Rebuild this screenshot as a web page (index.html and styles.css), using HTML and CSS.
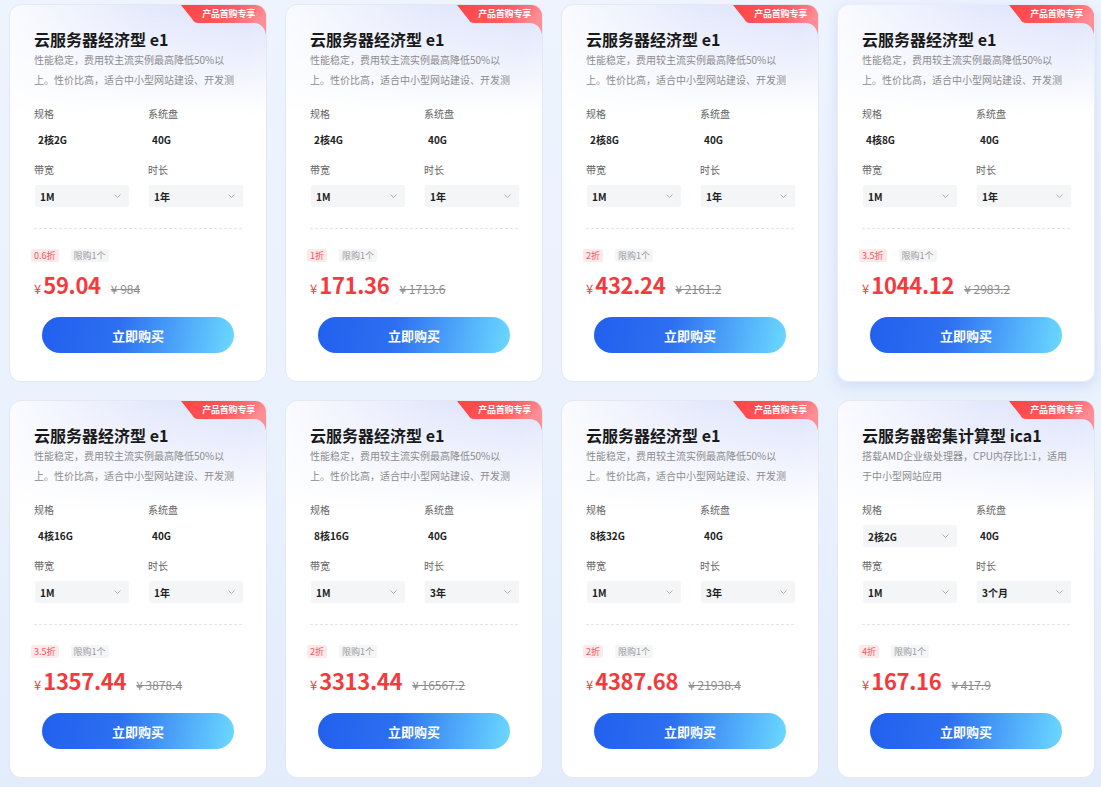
FILE: index.html
```html
<!DOCTYPE html>
<html lang="zh-CN">
<head>
    <meta charset="UTF-8">
    <meta name="viewport" content="width=device-width, initial-scale=1.0">
    <title>云服务器 - 产品首购专享</title>
    <link rel="stylesheet" href="styles.css">
</head>
<body>
    <div class="product-grid">

        <!-- 第一行 -->
        <div class="card">
            <svg class="ribbon" viewBox="0 0 85 30" width="85" height="30"><defs><linearGradient id="rb" x1="0" y1="0" x2="1" y2="0.3"><stop offset="0" stop-color="#ff4343"/><stop offset="0.6" stop-color="#ff5a5f"/><stop offset="1" stop-color="#ff8f97"/></linearGradient></defs><path d="M0,0 H85 V30 C84,23 80,18 72,18 H17 C14,18 12.5,16.5 11.5,14.5 Z" fill="url(#rb)"/></svg>
            <span class="ribbon-text">产品首购专享</span>
            <h3 class="card-title">云服务器经济型 e1</h3>
            <p class="card-desc">性能稳定，费用较主流实例最高降低50%以上。性价比高，适合中小型网站建设、开发测</p>
            <div class="spec-grid">
                <div class="spec"><div class="spec-label">规格</div><div class="spec-value">2核2G</div></div>
                <div class="spec"><div class="spec-label">系统盘</div><div class="spec-value">40G</div></div>
                <div class="spec"><div class="spec-label">带宽</div><div class="select">1M<svg class="arrow" viewBox="0 0 7 4" width="7" height="4"><polyline points="0.5,0.5 3.5,3.5 6.5,0.5"/></svg></div></div>
                <div class="spec"><div class="spec-label">时长</div><div class="select">1年<svg class="arrow" viewBox="0 0 7 4" width="7" height="4"><polyline points="0.5,0.5 3.5,3.5 6.5,0.5"/></svg></div></div>
            </div>
            <div class="divider"></div>
            <div class="tags"><span class="tag tag-red">0.6折</span><span class="tag tag-gray">限购1个</span></div>
            <div class="price-row"><span class="yen">¥</span><span class="price">59.04</span><span class="old-price">¥ 984</span></div>
            <button class="buy-btn">立即购买</button>
        </div>

        <div class="card">
            <svg class="ribbon" viewBox="0 0 85 30" width="85" height="30"><path d="M0,0 H85 V30 C84,23 80,18 72,18 H17 C14,18 12.5,16.5 11.5,14.5 Z" fill="url(#rb)"/></svg>
            <span class="ribbon-text">产品首购专享</span>
            <h3 class="card-title">云服务器经济型 e1</h3>
            <p class="card-desc">性能稳定，费用较主流实例最高降低50%以上。性价比高，适合中小型网站建设、开发测</p>
            <div class="spec-grid">
                <div class="spec"><div class="spec-label">规格</div><div class="spec-value">2核4G</div></div>
                <div class="spec"><div class="spec-label">系统盘</div><div class="spec-value">40G</div></div>
                <div class="spec"><div class="spec-label">带宽</div><div class="select">1M<svg class="arrow" viewBox="0 0 7 4" width="7" height="4"><polyline points="0.5,0.5 3.5,3.5 6.5,0.5"/></svg></div></div>
                <div class="spec"><div class="spec-label">时长</div><div class="select">1年<svg class="arrow" viewBox="0 0 7 4" width="7" height="4"><polyline points="0.5,0.5 3.5,3.5 6.5,0.5"/></svg></div></div>
            </div>
            <div class="divider"></div>
            <div class="tags"><span class="tag tag-red">1折</span><span class="tag tag-gray">限购1个</span></div>
            <div class="price-row"><span class="yen">¥</span><span class="price">171.36</span><span class="old-price">¥ 1713.6</span></div>
            <button class="buy-btn">立即购买</button>
        </div>

        <div class="card">
            <svg class="ribbon" viewBox="0 0 85 30" width="85" height="30"><path d="M0,0 H85 V30 C84,23 80,18 72,18 H17 C14,18 12.5,16.5 11.5,14.5 Z" fill="url(#rb)"/></svg>
            <span class="ribbon-text">产品首购专享</span>
            <h3 class="card-title">云服务器经济型 e1</h3>
            <p class="card-desc">性能稳定，费用较主流实例最高降低50%以上。性价比高，适合中小型网站建设、开发测</p>
            <div class="spec-grid">
                <div class="spec"><div class="spec-label">规格</div><div class="spec-value">2核8G</div></div>
                <div class="spec"><div class="spec-label">系统盘</div><div class="spec-value">40G</div></div>
                <div class="spec"><div class="spec-label">带宽</div><div class="select">1M<svg class="arrow" viewBox="0 0 7 4" width="7" height="4"><polyline points="0.5,0.5 3.5,3.5 6.5,0.5"/></svg></div></div>
                <div class="spec"><div class="spec-label">时长</div><div class="select">1年<svg class="arrow" viewBox="0 0 7 4" width="7" height="4"><polyline points="0.5,0.5 3.5,3.5 6.5,0.5"/></svg></div></div>
            </div>
            <div class="divider"></div>
            <div class="tags"><span class="tag tag-red">2折</span><span class="tag tag-gray">限购1个</span></div>
            <div class="price-row"><span class="yen">¥</span><span class="price">432.24</span><span class="old-price">¥ 2161.2</span></div>
            <button class="buy-btn">立即购买</button>
        </div>

        <div class="card card-active">
            <svg class="ribbon" viewBox="0 0 85 30" width="85" height="30"><path d="M0,0 H85 V30 C84,23 80,18 72,18 H17 C14,18 12.5,16.5 11.5,14.5 Z" fill="url(#rb)"/></svg>
            <span class="ribbon-text">产品首购专享</span>
            <h3 class="card-title">云服务器经济型 e1</h3>
            <p class="card-desc">性能稳定，费用较主流实例最高降低50%以上。性价比高，适合中小型网站建设、开发测</p>
            <div class="spec-grid">
                <div class="spec"><div class="spec-label">规格</div><div class="spec-value">4核8G</div></div>
                <div class="spec"><div class="spec-label">系统盘</div><div class="spec-value">40G</div></div>
                <div class="spec"><div class="spec-label">带宽</div><div class="select">1M<svg class="arrow" viewBox="0 0 7 4" width="7" height="4"><polyline points="0.5,0.5 3.5,3.5 6.5,0.5"/></svg></div></div>
                <div class="spec"><div class="spec-label">时长</div><div class="select">1年<svg class="arrow" viewBox="0 0 7 4" width="7" height="4"><polyline points="0.5,0.5 3.5,3.5 6.5,0.5"/></svg></div></div>
            </div>
            <div class="divider"></div>
            <div class="tags"><span class="tag tag-red">3.5折</span><span class="tag tag-gray">限购1个</span></div>
            <div class="price-row"><span class="yen">¥</span><span class="price">1044.12</span><span class="old-price">¥ 2983.2</span></div>
            <button class="buy-btn">立即购买</button>
        </div>

        <!-- 第二行 -->
        <div class="card">
            <svg class="ribbon" viewBox="0 0 85 30" width="85" height="30"><path d="M0,0 H85 V30 C84,23 80,18 72,18 H17 C14,18 12.5,16.5 11.5,14.5 Z" fill="url(#rb)"/></svg>
            <span class="ribbon-text">产品首购专享</span>
            <h3 class="card-title">云服务器经济型 e1</h3>
            <p class="card-desc">性能稳定，费用较主流实例最高降低50%以上。性价比高，适合中小型网站建设、开发测</p>
            <div class="spec-grid">
                <div class="spec"><div class="spec-label">规格</div><div class="spec-value">4核16G</div></div>
                <div class="spec"><div class="spec-label">系统盘</div><div class="spec-value">40G</div></div>
                <div class="spec"><div class="spec-label">带宽</div><div class="select">1M<svg class="arrow" viewBox="0 0 7 4" width="7" height="4"><polyline points="0.5,0.5 3.5,3.5 6.5,0.5"/></svg></div></div>
                <div class="spec"><div class="spec-label">时长</div><div class="select">1年<svg class="arrow" viewBox="0 0 7 4" width="7" height="4"><polyline points="0.5,0.5 3.5,3.5 6.5,0.5"/></svg></div></div>
            </div>
            <div class="divider"></div>
            <div class="tags"><span class="tag tag-red">3.5折</span><span class="tag tag-gray">限购1个</span></div>
            <div class="price-row"><span class="yen">¥</span><span class="price">1357.44</span><span class="old-price">¥ 3878.4</span></div>
            <button class="buy-btn">立即购买</button>
        </div>

        <div class="card">
            <svg class="ribbon" viewBox="0 0 85 30" width="85" height="30"><path d="M0,0 H85 V30 C84,23 80,18 72,18 H17 C14,18 12.5,16.5 11.5,14.5 Z" fill="url(#rb)"/></svg>
            <span class="ribbon-text">产品首购专享</span>
            <h3 class="card-title">云服务器经济型 e1</h3>
            <p class="card-desc">性能稳定，费用较主流实例最高降低50%以上。性价比高，适合中小型网站建设、开发测</p>
            <div class="spec-grid">
                <div class="spec"><div class="spec-label">规格</div><div class="spec-value">8核16G</div></div>
                <div class="spec"><div class="spec-label">系统盘</div><div class="spec-value">40G</div></div>
                <div class="spec"><div class="spec-label">带宽</div><div class="select">1M<svg class="arrow" viewBox="0 0 7 4" width="7" height="4"><polyline points="0.5,0.5 3.5,3.5 6.5,0.5"/></svg></div></div>
                <div class="spec"><div class="spec-label">时长</div><div class="select">3年<svg class="arrow" viewBox="0 0 7 4" width="7" height="4"><polyline points="0.5,0.5 3.5,3.5 6.5,0.5"/></svg></div></div>
            </div>
            <div class="divider"></div>
            <div class="tags"><span class="tag tag-red">2折</span><span class="tag tag-gray">限购1个</span></div>
            <div class="price-row"><span class="yen">¥</span><span class="price">3313.44</span><span class="old-price">¥ 16567.2</span></div>
            <button class="buy-btn">立即购买</button>
        </div>

        <div class="card">
            <svg class="ribbon" viewBox="0 0 85 30" width="85" height="30"><path d="M0,0 H85 V30 C84,23 80,18 72,18 H17 C14,18 12.5,16.5 11.5,14.5 Z" fill="url(#rb)"/></svg>
            <span class="ribbon-text">产品首购专享</span>
            <h3 class="card-title">云服务器经济型 e1</h3>
            <p class="card-desc">性能稳定，费用较主流实例最高降低50%以上。性价比高，适合中小型网站建设、开发测</p>
            <div class="spec-grid">
                <div class="spec"><div class="spec-label">规格</div><div class="spec-value">8核32G</div></div>
                <div class="spec"><div class="spec-label">系统盘</div><div class="spec-value">40G</div></div>
                <div class="spec"><div class="spec-label">带宽</div><div class="select">1M<svg class="arrow" viewBox="0 0 7 4" width="7" height="4"><polyline points="0.5,0.5 3.5,3.5 6.5,0.5"/></svg></div></div>
                <div class="spec"><div class="spec-label">时长</div><div class="select">3年<svg class="arrow" viewBox="0 0 7 4" width="7" height="4"><polyline points="0.5,0.5 3.5,3.5 6.5,0.5"/></svg></div></div>
            </div>
            <div class="divider"></div>
            <div class="tags"><span class="tag tag-red">2折</span><span class="tag tag-gray">限购1个</span></div>
            <div class="price-row"><span class="yen">¥</span><span class="price">4387.68</span><span class="old-price">¥ 21938.4</span></div>
            <button class="buy-btn">立即购买</button>
        </div>

        <div class="card">
            <svg class="ribbon" viewBox="0 0 85 30" width="85" height="30"><path d="M0,0 H85 V30 C84,23 80,18 72,18 H17 C14,18 12.5,16.5 11.5,14.5 Z" fill="url(#rb)"/></svg>
            <span class="ribbon-text">产品首购专享</span>
            <h3 class="card-title">云服务器密集计算型 ica1</h3>
            <p class="card-desc">搭载AMD企业级处理器，CPU内存比1:1，适用于中小型网站应用</p>
            <div class="spec-grid">
                <div class="spec"><div class="spec-label">规格</div><div class="select">2核2G<svg class="arrow" viewBox="0 0 7 4" width="7" height="4"><polyline points="0.5,0.5 3.5,3.5 6.5,0.5"/></svg></div></div>
                <div class="spec"><div class="spec-label">系统盘</div><div class="spec-value">40G</div></div>
                <div class="spec"><div class="spec-label">带宽</div><div class="select">1M<svg class="arrow" viewBox="0 0 7 4" width="7" height="4"><polyline points="0.5,0.5 3.5,3.5 6.5,0.5"/></svg></div></div>
                <div class="spec"><div class="spec-label">时长</div><div class="select">3个月<svg class="arrow" viewBox="0 0 7 4" width="7" height="4"><polyline points="0.5,0.5 3.5,3.5 6.5,0.5"/></svg></div></div>
            </div>
            <div class="divider"></div>
            <div class="tags"><span class="tag tag-red">4折</span><span class="tag tag-gray">限购1个</span></div>
            <div class="price-row"><span class="yen">¥</span><span class="price">167.16</span><span class="old-price">¥ 417.9</span></div>
            <button class="buy-btn">立即购买</button>
        </div>

    </div>
</body>
</html>
```

FILE: styles.css
```css
body {
    margin: 0;
    font-family: "Noto Sans CJK SC", "Noto Sans", sans-serif;
    background: linear-gradient(180deg, #eef4fe 0%, #e9f1fd 60%, #e2ecfb 100%);
    color: #1a1a1a;
    min-height: 787px;
}
.product-grid {
    display: grid;
    grid-template-columns: repeat(4, 258px);
    gap: 18px;
    padding: 4px 0 0 9px;
}
.card {
    position: relative;
    overflow: hidden;
    box-sizing: border-box;
    height: 378px;
    padding: 24px 24px 0 24px;
    border: 1px solid #e4e8f1;
    border-radius: 12px;
    background:
        linear-gradient(180deg, rgba(255, 255, 255, 0) 0, #fff 110px),
        linear-gradient(100deg, #fafbff 0%, #e4e8fc 45%, #dce2fb 75%, #e7ebfd 100%);
}
.card-active {
    border-color: #e8edf7;
    box-shadow: 0 4px 14px rgba(60, 110, 210, 0.16);
}
.ribbon {
    position: absolute;
    top: 0;
    right: 0;
    display: block;
}
.ribbon-text {
    position: absolute;
    top: 2px;
    right: 11px;
    color: #fff;
    font-size: 9px;
    font-weight: 700;
    line-height: 14px;
    letter-spacing: -0.2px;
}
.card-title {
    margin: 0;
    font-size: 16px;
    font-weight: 700;
    line-height: 20px;
    color: #1a1a1a;
}
.card-desc {
    margin: 1px 0 0;
    height: 41px;
    overflow: hidden;
    font-size: 10px;
    line-height: 20px;
    color: #8c8c8c;
}
.spec-grid {
    display: grid;
    grid-template-columns: 95px 95px;
    column-gap: 19px;
    row-gap: 12px;
    margin-top: 16px;
}
.spec-label {
    font-size: 10px;
    line-height: 14px;
    color: #666;
    margin-bottom: 8px;
}
.spec-value {
    height: 22px;
    line-height: 22px;
    padding-left: 4px;
    font-size: 10px;
    font-weight: 700;
    color: #222;
}
.select {
    display: flex;
    align-items: center;
    justify-content: space-between;
    height: 22px;
    padding: 0 8px 0 5px;
    margin-left: 1px;
    border-radius: 2px;
    background: #f3f5f6;
    font-size: 10px;
    font-weight: 700;
    color: #222;
}
.arrow {
    fill: none;
    stroke: #aaa;
    stroke-width: 0.9;
}
.divider {
    margin-top: 21px;
    border-top: 1px dashed #e3e5e8;
}
.tags {
    display: flex;
    gap: 12px;
    margin: 20px 0 0 -3px;
}
.tag {
    height: 13px;
    line-height: 13px;
    padding: 0 3px;
    border-radius: 2px;
    font-size: 9px;
}
.tag-red {
    background: #fde9ea;
    color: #f0575b;
}
.tag-gray {
    background: #f4f5f7;
    color: #999;
}
.price-row {
    display: flex;
    align-items: baseline;
    height: 30px;
    margin-top: 7px;
    line-height: 30px;
}
.yen {
    font-size: 13px;
    color: #f5393d;
    margin-right: 2px;
}
.price {
    font-size: 22px;
    font-weight: 700;
    color: #f5393d;
    letter-spacing: -0.3px;
}
.old-price {
    margin-left: 10px;
    font-size: 12px;
    color: #8c8c8c;
    text-decoration: line-through;
}
.buy-btn {
    display: block;
    width: 192px;
    height: 36px;
    margin: 18px auto 0;
    border: none;
    border-radius: 18px;
    background: linear-gradient(100deg, #2160ee 0%, #2d6ff1 40%, #4fa8fa 72%, #6bd9ff 100%);
    color: #fff;
    font-family: inherit;
    font-size: 13px;
    font-weight: 700;
    cursor: pointer;
}
```
